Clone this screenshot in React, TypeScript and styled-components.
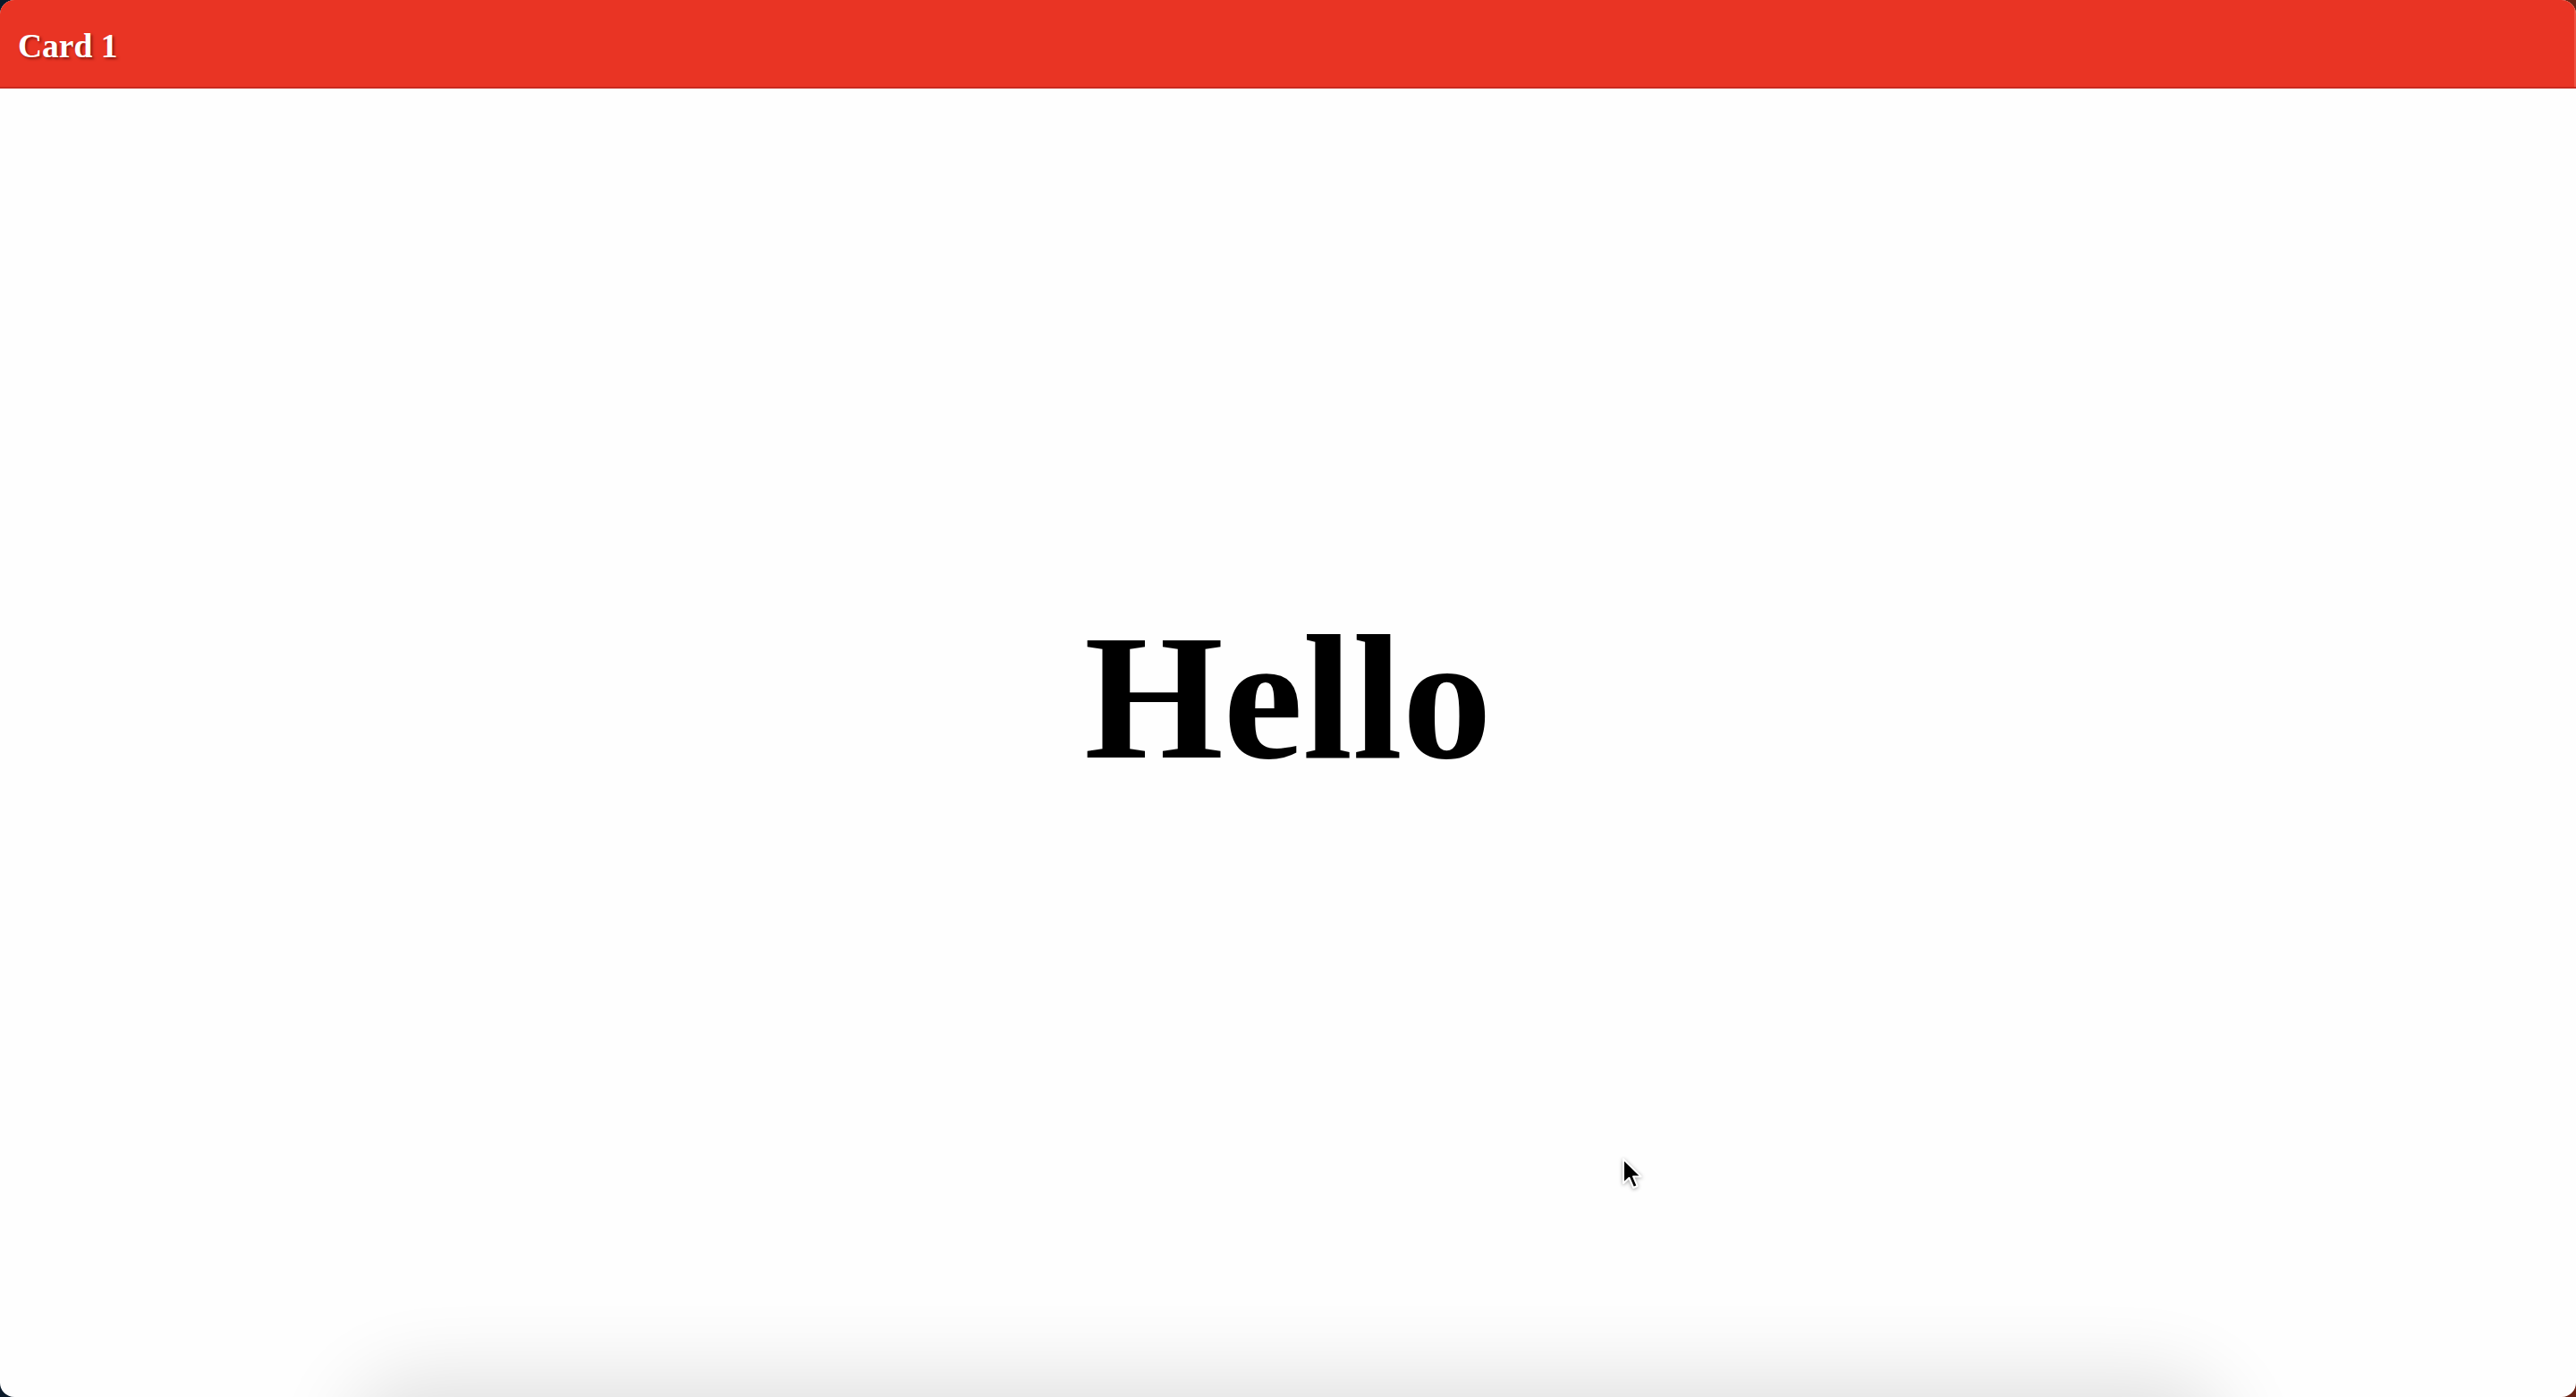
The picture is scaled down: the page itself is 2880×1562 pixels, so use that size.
import React from "react";
import styled, { createGlobalStyle } from "styled-components";

const GlobalStyle = createGlobalStyle`
  html, body {
    margin: 0;
    padding: 0;
    height: 100%;
    overflow: hidden;
  }
  body {
    background: linear-gradient(90deg, #0b1a2a 0%, #2a1c30 50%, #6a2214 100%);
    font-family: "Liberation Serif", "Times New Roman", serif;
  }
  #root {
    height: 100%;
  }
`;

const Window = styled.div`
  position: relative;
  height: 100vh;
  display: flex;
  flex-direction: column;
  background: #fefefe;
  border-radius: 16px;
  overflow: hidden;
`;

const Header = styled.header`
  box-sizing: border-box;
  height: 99px;
  flex: none;
  padding: 30px 20px 0;
  background: #e93424;
  border-bottom: 2px solid #c92a1f;
  box-shadow: inset -2px 0 0 rgba(255, 140, 120, 0.35);
`;

const CardTitle = styled.h3`
  margin: 0;
  font-family: "Liberation Serif", "Times New Roman", serif;
  font-weight: 700;
  font-size: 37.5px;
  color: #ffffff;
  text-shadow: 2px 2px 3px rgba(60, 0, 0, 0.55);
`;

const Content = styled.main`
  flex: 1;
  display: flex;
  align-items: center;
  justify-content: center;
`;

const Greeting = styled.h1`
  margin: 0;
  font-family: "Liberation Serif", "Times New Roman", serif;
  font-weight: 700;
  font-size: 200px;
  color: #000000;
`;

const PeekStrip = styled.div`
  flex: none;
  height: 102px;
  overflow: hidden;
  padding: 0 440px;
`;

const NextCard = styled.div`
  height: 60px;
  margin-top: 150px;
  border-radius: 30px;
  background: #e6e6e6;
  box-shadow: 0 -20px 90px 50px rgba(0, 0, 0, 0.12);
`;

const Cursor = styled.svg`
  position: absolute;
  left: 1813px;
  top: 1294px;
  width: 24px;
  height: 36px;
  filter: drop-shadow(0 1px 2px rgba(0, 0, 0, 0.35));
`;

export default function App() {
  return (
    <>
      <GlobalStyle />
      <Window>
        <Header>
          <CardTitle>Card 1</CardTitle>
        </Header>
        <Content>
          <Greeting>Hello</Greeting>
        </Content>
        <PeekStrip>
          <NextCard />
        </PeekStrip>
        <Cursor viewBox="0 0 12 18">
          <path
            d="M1 1 L1 14.5 L4.2 11.5 L6.6 17 L8.8 16 L6.5 10.7 L10.8 10.7 Z"
            fill="#000"
            stroke="#fff"
            strokeWidth="1"
            strokeLinejoin="round"
          />
        </Cursor>
      </Window>
    </>
  );
}
